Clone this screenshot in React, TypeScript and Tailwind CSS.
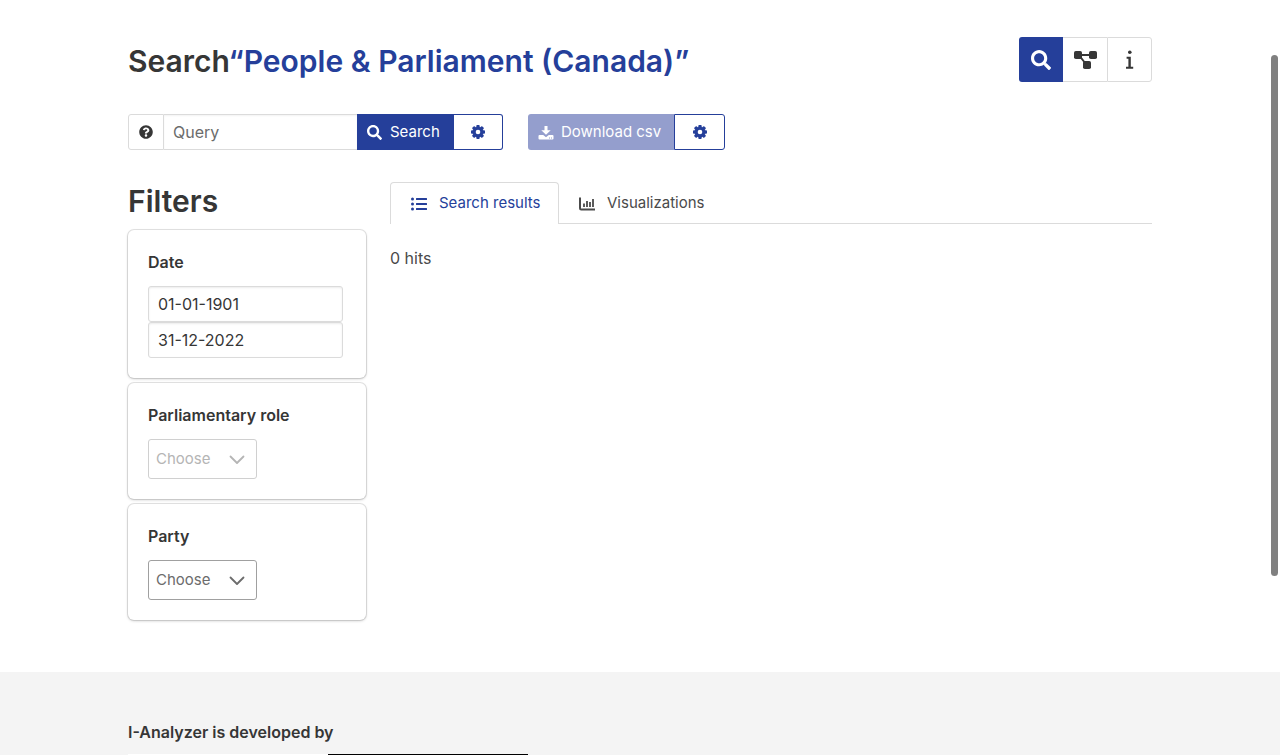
import type { ReactNode } from "react";
import { FaListUl, FaQuestionCircle, FaSearch } from "react-icons/fa";

function GearIcon() {
  return (
    <svg viewBox="0 0 16 16" className="size-4" aria-hidden="true">
      <g fill="currentColor">
        {[0, 45, 90, 135].map((a) => (
          <rect key={a} x="6.3" y="1" width="3.4" height="14" rx="0.9" transform={`rotate(${a} 8 8)`} />
        ))}
        <circle cx="8" cy="8" r="5.2" />
      </g>
      <circle cx="8" cy="8" r="2.3" fill="#fff" />
    </svg>
  );
}

function InfoIcon() {
  return (
    <svg viewBox="0 0 20 20" className="size-5" fill="currentColor" aria-hidden="true">
      <circle cx="9.8" cy="2.2" r="1.8" />
      <path d="M6.6 6.8h4.2v9.9h2.4v2H6v-2h2.4V8.8H6.6z" />
    </svg>
  );
}

function DiagramIcon() {
  return (
    <svg viewBox="0 0 24 20" className="h-5 w-6" fill="currentColor" aria-hidden="true">
      <rect x="1" y="1" width="8" height="8" rx="1.8" />
      <rect x="16" y="1" width="8" height="8" rx="1.8" />
      <rect x="10" y="11" width="8" height="8" rx="1.8" />
      <path d="M7 5h11M7 6.5l5.5 7" stroke="currentColor" strokeWidth="2" />
    </svg>
  );
}

function DownloadIcon() {
  return (
    <svg viewBox="0 0 16 16" className="size-4" fill="currentColor" aria-hidden="true">
      <path d="M6.5 1h3v4.2h3.2L8 9.8 3.3 5.2h3.2z" />
      <path
        fillRule="evenodd"
        d="M1.5 10h3.7L8 12.2 10.8 10h3.7q1 0 1 1v2.6q0 1-1 1h-13q-1 0-1-1V11q0-1 1-1zM11 12.4v1h1v-1zM13 12.4v1h1v-1z"
      />
    </svg>
  );
}

function ChartIcon() {
  return (
    <svg viewBox="0 0 16 16" className="size-4" fill="none" stroke="currentColor" aria-hidden="true">
      <path d="M1 1.5v10.8q0 1.2 1.2 1.2H16" strokeWidth="2" />
      <path d="M5 7.5V11M8 5v6M11 6v5M14 3v8" strokeWidth="1.8" />
    </svg>
  );
}

function Chevron() {
  return (
    <svg viewBox="0 0 16 16" className="size-4" fill="none" stroke="currentColor" strokeWidth="1.8" strokeLinecap="round" strokeLinejoin="round" aria-hidden="true">
      <path d="M1.5 4.5 8 11l6.5-6.5" />
    </svg>
  );
}

function FilterCard({ title, children }: { title: string; children: ReactNode }) {
  return (
    <section className="rounded-md bg-white p-5 shadow-[0_1px_3px_rgba(10,10,10,0.2),0_0_0_1px_rgba(10,10,10,0.1)]">
      <h3 className="mb-3 text-base leading-6 font-semibold text-[#363636]">{title}</h3>
      {children}
    </section>
  );
}

function DateInput({ label, value }: { label: string; value: string }) {
  return (
    <input
      aria-label={label}
      defaultValue={value}
      className="block h-9 w-full rounded-[3px] border border-[#dbdbdb] bg-white px-[9px] text-base text-[#363636] shadow-[inset_0_1px_2px_rgba(10,10,10,0.08)] outline-none"
    />
  );
}

function Choose({ label, disabled = false }: { label: string; disabled?: boolean }) {
  return (
    <button
      type="button"
      aria-label={`${label}: Choose`}
      disabled={disabled}
      className="flex h-10 w-[109px] items-center justify-between rounded-[3px] border border-[#a0a0a0] pt-px pr-[11px] pl-[7px] text-[15px] text-[#6c6c6c] disabled:border-[#d0d0d0] disabled:text-[#b5b5b5]"
    >
      Choose
      <Chevron />
    </button>
  );
}

export default function App() {
  return (
    <div className="bg-white font-['Inter',sans-serif] text-base text-[#4a4a4a]">
      <div className="fixed top-[55px] right-0.5 h-[521px] w-[7px] rounded-full bg-[#808080]" />
      <main className="mx-auto max-w-5xl pt-[37px] pb-[52px]">
        <header className="mb-[29px] flex items-start justify-between">
          <h1 className="text-[30px] leading-[48px] font-semibold text-[#363636]">
            Search<span className="text-[#253f9a]">“People &amp; Parliament (Canada)”</span>
          </h1>
          <nav className="flex text-xl text-[#363636]">
            <a href="#search" aria-label="Search" className="flex h-[45px] w-11 items-center justify-center rounded-l-[3px] bg-[#253f9a] text-white">
              <FaSearch />
            </a>
            <a href="#models" aria-label="Word models" className="flex h-[45px] w-11 items-center justify-center border-y border-[#dbdbdb]">
              <DiagramIcon />
            </a>
            <a href="#info" aria-label="Information" className="flex h-[45px] w-[45px] items-center justify-center rounded-r-[3px] border border-[#dbdbdb]">
              <InfoIcon />
            </a>
          </nav>
        </header>

        <div className="mb-8 flex gap-[25px]">
          <form className="flex h-9" onSubmit={(e) => e.preventDefault()}>
            <button type="button" aria-label="Help" className="flex w-9 items-center justify-center rounded-l-[3px] border border-[#dbdbdb] text-sm text-[#363636]">
              <FaQuestionCircle />
            </button>
            <input aria-label="Query" placeholder="Query" className="w-[193px] border-y border-[#dbdbdb] px-[9px] text-base shadow-[inset_0_1px_2px_rgba(10,10,10,0.05)] outline-none placeholder:text-[#6c6c6c]" />
            <button type="submit" className="flex w-[97px] items-center gap-2 bg-[#253f9a] pt-px pl-2.5 text-[15px] text-white">
              <FaSearch />
              Search
            </button>
            <button type="button" aria-label="Search settings" className="flex w-[49px] items-center justify-center rounded-r-[3px] border border-l-0 border-[#253f9a] text-[#253f9a]">
              <GearIcon />
            </button>
          </form>
          <div className="flex h-9">
            <button type="button" disabled className="flex w-[146px] items-center gap-[7px] rounded-l-[3px] bg-[#949ecd] pt-px pl-2.5 text-[15px] text-white">
              <DownloadIcon />
              Download csv
            </button>
            <button type="button" aria-label="Download settings" className="flex w-[51px] items-center justify-center rounded-r-[3px] border border-[#253f9a] text-[#253f9a]">
              <GearIcon />
            </button>
          </div>
        </div>

        <div className="flex gap-6">
          <aside className="w-[238px] shrink-0">
            <h2 className="mb-2.5 text-[30px] leading-[38px] font-semibold text-[#363636]">Filters</h2>
            <div className="flex flex-col gap-[5px]">
              <FilterCard title="Date">
                <div className="mr-[3px]">
                  <DateInput label="From date" value="01-01-1901" />
                  <DateInput label="To date" value="31-12-2022" />
                </div>
              </FilterCard>
              <FilterCard title="Parliamentary role">
                <Choose label="Parliamentary role" disabled />
              </FilterCard>
              <FilterCard title="Party">
                <Choose label="Party" />
              </FilterCard>
            </div>
          </aside>
          <section className="min-w-0 grow">
            <nav className="flex border-b border-[#dbdbdb] text-[15px]">
              <a href="#results" className="-mb-px flex h-[42px] w-[169px] items-center gap-3 rounded-t border border-b-0 border-[#dbdbdb] bg-white pl-5 text-[#253f9a]">
                <FaListUl className="text-base" />
                Search results
              </a>
              <a href="#visualizations" className="flex h-[41px] items-center gap-3 px-5 pt-0.5">
                <ChartIcon />
                Visualizations
              </a>
            </nav>
            <p className="mt-[22px] leading-6">0 hits</p>
          </section>
        </div>
      </main>
      <footer className="bg-[#f4f4f4] pt-12">
        <div className="mx-auto max-w-5xl">
          <h2 className="mb-2.5 font-semibold text-[#363636]">I-Analyzer is developed by</h2>
          <div className="flex">
            <div className="h-px w-[200px] bg-white" />
            <div className="h-px w-[200px] bg-black" />
          </div>
        </div>
      </footer>
    </div>
  );
}
